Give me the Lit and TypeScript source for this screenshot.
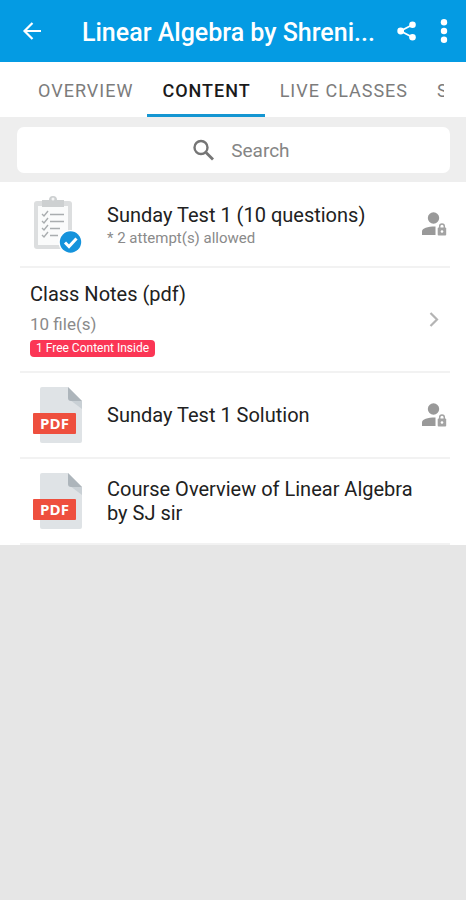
import { LitElement, html, css, svg, nothing } from "lit";
import { customElement, property } from "lit/decorators.js";
import { classMap } from "lit/directives/class-map.js";

type Kind = "test" | "pdf" | "folder";

interface Item {
  kind: Kind;
  title: string;
  note?: string;
  badge?: string;
  locked?: boolean;
}

const items: Item[] = [
  { kind: "test", title: "Sunday Test 1 (10 questions)", note: "* 2 attempt(s) allowed", locked: true },
  { kind: "folder", title: "Class Notes (pdf)", note: "10 file(s)", badge: "1 Free Content Inside" },
  { kind: "pdf", title: "Sunday Test 1 Solution", locked: true },
  { kind: "pdf", title: "Course Overview of Linear Algebra by SJ sir" },
];

const tabs = ["OVERVIEW", "CONTENT", "LIVE CLASSES", "S"];

const clipboardIcon = svg`
  <svg width="54" height="60" viewBox="0 0 54 60" aria-hidden="true">
    <rect x="4" y="7" width="38" height="48" rx="3" fill="#dcdedf"/>
    <rect x="8" y="12" width="30" height="39" fill="#fafbfb"/>
    <path d="M12 6h7a4 4 0 0 1 8 0h7v7H12z" fill="#cdd0d1"/>
    <circle cx="23" cy="5" r="1.5" fill="#f5f5f5"/>
    <g fill="none" stroke="#a9adaf" stroke-width="1.4">
      <path d="M12 20l2 2 4-5M12 27l2 2 4-5M12 34l2 2 4-5M12 41l2 2 4-5"/>
      <path d="M20 20.500h14M20 27.500h14M20 34.500h10M20 41.500h8" stroke-width="1.600"/>
    </g>
    <circle cx="40.500" cy="48" r="12" fill="#fff"/>
    <circle cx="40.500" cy="48" r="10.700" fill="#1593dc"/>
    <path d="M35 48.500l4 4 7.500-8" fill="none" stroke="#fff" stroke-width="3"/>
  </svg>`;

const pdfIcon = svg`
  <svg width="54" height="60" viewBox="0 0 54 60" aria-hidden="true">
    <path d="M12 2h26l14 14v40a2 2 0 0 1-2 2H12a2 2 0 0 1-2-2V4a2 2 0 0 1 2-2z" fill="#dfe3e6"/>
    <path d="M40 15l12 9v-8z" fill="#c9d0d5"/>
    <path d="M38 2l14 14H41a3 3 0 0 1-3-3z" fill="#adb5bb"/>
    <rect x="3" y="28" width="43" height="21" rx="1" fill="#ee4f3e"/>
    <text x="24.500" y="44" text-anchor="middle" class="pdf-label">PDF</text>
  </svg>`;

const lockIcon = svg`
  <svg class="lock" width="26" height="26" viewBox="0 0 26 26" role="img" aria-label="Locked">
    <circle cx="11.500" cy="7" r="5.700" fill="#999"/>
    <path d="M0 24v-3.500C0 17 5.500 15.500 13.500 15.500V24z" fill="#999"/>
    <path d="M17.700 17v-1.800a2.300 2.300 0 0 1 4.600 0V17" fill="none" stroke="#a3a3a3" stroke-width="1.500"/>
    <rect x="15.700" y="16.500" width="8.500" height="8" rx="1" fill="#a3a3a3"/>
    <circle cx="20" cy="20.500" r="1.300" fill="#fff"/>
  </svg>`;

const chevronIcon = svg`
  <svg class="chevron" width="26" height="26" viewBox="0 0 26 26" aria-hidden="true">
    <path d="M8.500 6l6.500 6.500-6.500 6.500" fill="none" stroke="#b4b4b4" stroke-width="2.200"/>
  </svg>`;

@customElement("content-row")
export class ContentRow extends LitElement {
  @property({ attribute: false }) item!: Item;

  static styles = css`
    :host {
      display: block;
    }
    .row {
      display: flex;
      align-items: center;
      box-sizing: border-box;
      min-height: 86px;
      margin: 0 16px 0 20px;
      padding: 12px 2px 12px 10px;
      border-bottom: 2px solid #f2f2f2;
      color: #212121;
      text-decoration: none;
    }
    .row.folder {
      min-height: 105px;
    }
    .thumb {
      flex: none;
      width: 54px;
      height: 60px;
      margin-right: 23px;
    }
    .thumb svg,
    .lock,
    .chevron {
      display: block;
    }
    .body {
      flex: 1;
      min-width: 0;
    }
    .title {
      font-size: 20px;
      line-height: 24px;
    }
    .test .body {
      padding-top: 4px;
    }
    .note {
      font-size: 15px;
      line-height: 22px;
      color: #8a8a8a;
    }
    .folder .note {
      padding-top: 6px;
      font-size: 17px;
      line-height: 24px;
    }
    .badge {
      display: block;
      width: max-content;
      margin-top: 4px;
      padding: 0 6px;
      border-radius: 4px;
      background: #fb3655;
      color: #fff;
      font-size: 12px;
      line-height: 17px;
    }
    .end {
      flex: none;
      width: 26px;
      margin-left: 8px;
    }
    .pdf-label {
      fill: #fff;
      font-family: "Open Sans", sans-serif;
      font-size: 15px;
      font-weight: 700;
    }
  `;

  render() {
    const { kind, title, note, badge, locked } = this.item;
    return html`
      <a href="#" class=${classMap({ row: true, [kind]: true })}>
        ${kind === "folder"
          ? nothing
          : html`<span class="thumb">${kind === "test" ? clipboardIcon : pdfIcon}</span>`}
        <div class="body">
          <div class="title">${title}</div>
          ${note ? html`<div class="note">${note}</div>` : nothing}
          ${badge ? html`<span class="badge">${badge}</span>` : nothing}
        </div>
        <span class="end">${locked ? lockIcon : kind === "folder" ? chevronIcon : nothing}</span>
      </a>
    `;
  }
}

@customElement("app-root")
export class AppRoot extends LitElement {
  static styles = css`
    :host {
      display: block;
      min-height: 100vh;
      background: #e6e6e6;
      font-family: Roboto, sans-serif;
    }
    button {
      padding: 0;
      border: 0;
      background: none;
      color: inherit;
      font: inherit;
      cursor: pointer;
    }
    svg {
      display: block;
    }
    .bar {
      display: flex;
      align-items: center;
      height: 62px;
      padding: 0 14px 0 20px;
      background: #049be3;
      color: #fff;
    }
    .heading {
      flex: 1;
      min-width: 0;
      margin: 0 0 0 37px;
      padding-top: 3px;
      white-space: nowrap;
      font-size: 25px;
      line-height: 32px;
      font-weight: 500;
    }
    .more {
      margin-left: 18px;
    }
    .tabs {
      display: flex;
      height: 55px;
      padding: 0 22px 0 23px;
      background: #fff;
    }
    .strip {
      display: flex;
      flex: 1;
      min-width: 0;
      overflow: hidden;
    }
    .tab {
      flex: none;
      box-sizing: border-box;
      padding: 4px 14px 0 15px;
      border-bottom: 3px solid transparent;
      color: #7c7c7c;
      font-size: 18px;
      letter-spacing: 1px;
    }
    .tab.active {
      border-bottom-color: #1496d2;
      color: #1a1a1a;
      font-weight: 500;
    }
    .search {
      padding: 10px 16px 9px 17px;
      background: #eeeeee;
    }
    .field {
      display: flex;
      align-items: center;
      gap: 15px;
      height: 46px;
      padding-left: 40%;
      border-radius: 7px;
      background: #fff;
    }
    .field input {
      flex: 1;
      min-width: 0;
      padding: 2px 0 0;
      border: 0;
      outline: 0;
      background: none;
      color: #333;
      font: 19px/24px Roboto, sans-serif;
    }
    .field input::placeholder {
      color: #858585;
      opacity: 1;
    }
    .list {
      margin: 0;
      padding: 0;
      background: #fff;
      list-style: none;
    }
  `;

  render() {
    return html`
      <header class="bar">
        <button aria-label="Back">
          <svg width="25" height="24" viewBox="0 0 25 24">
            <path d="M21 12H5M12.500 4L4.500 12l8 8" fill="none" stroke="#fff" stroke-width="2.200" />
          </svg>
        </button>
        <h1 class="heading">Linear Algebra by Shreni...</h1>
        <button aria-label="Share">
          <svg width="22" height="22" viewBox="0 0 22 22">
            <path d="M17 4.500L4.500 11 17 17.500" fill="none" stroke="#fff" stroke-width="1.800" />
            <g fill="#fff">
              <circle cx="16.500" cy="4.700" r="3.300" />
              <circle cx="4.700" cy="11" r="3.400" />
              <circle cx="16.500" cy="17.300" r="3.300" />
            </g>
          </svg>
        </button>
        <button class="more" aria-label="More options">
          <svg width="16" height="26" viewBox="0 0 16 26" fill="#fff">
            <circle cx="8" cy="4.300" r="3.200" />
            <circle cx="8" cy="13" r="3.200" />
            <circle cx="8" cy="21.700" r="3.200" />
          </svg>
        </button>
      </header>
      <nav class="tabs">
        <div class="strip" role="tablist">
          ${tabs.map(
            (tab, i) => html`
              <button
                role="tab"
                aria-selected=${i === 1 ? "true" : "false"}
                class=${classMap({ tab: true, active: i === 1 })}
              >${tab}</button>
            `,
          )}
        </div>
      </nav>
      <div class="search">
        <label class="field">
          <svg width="26" height="26" viewBox="0 0 26 26" fill="none" stroke="#757575">
            <circle cx="11" cy="10.500" r="6.500" stroke-width="2.400" />
            <path d="M16 15.500l7 7" stroke-width="2.800" />
          </svg>
          <input type="text" placeholder="Search" aria-label="Search" />
        </label>
      </div>
      <ul class="list">
        ${items.map((item) => html`<li><content-row .item=${item}></content-row></li>`)}
      </ul>
    `;
  }
}
